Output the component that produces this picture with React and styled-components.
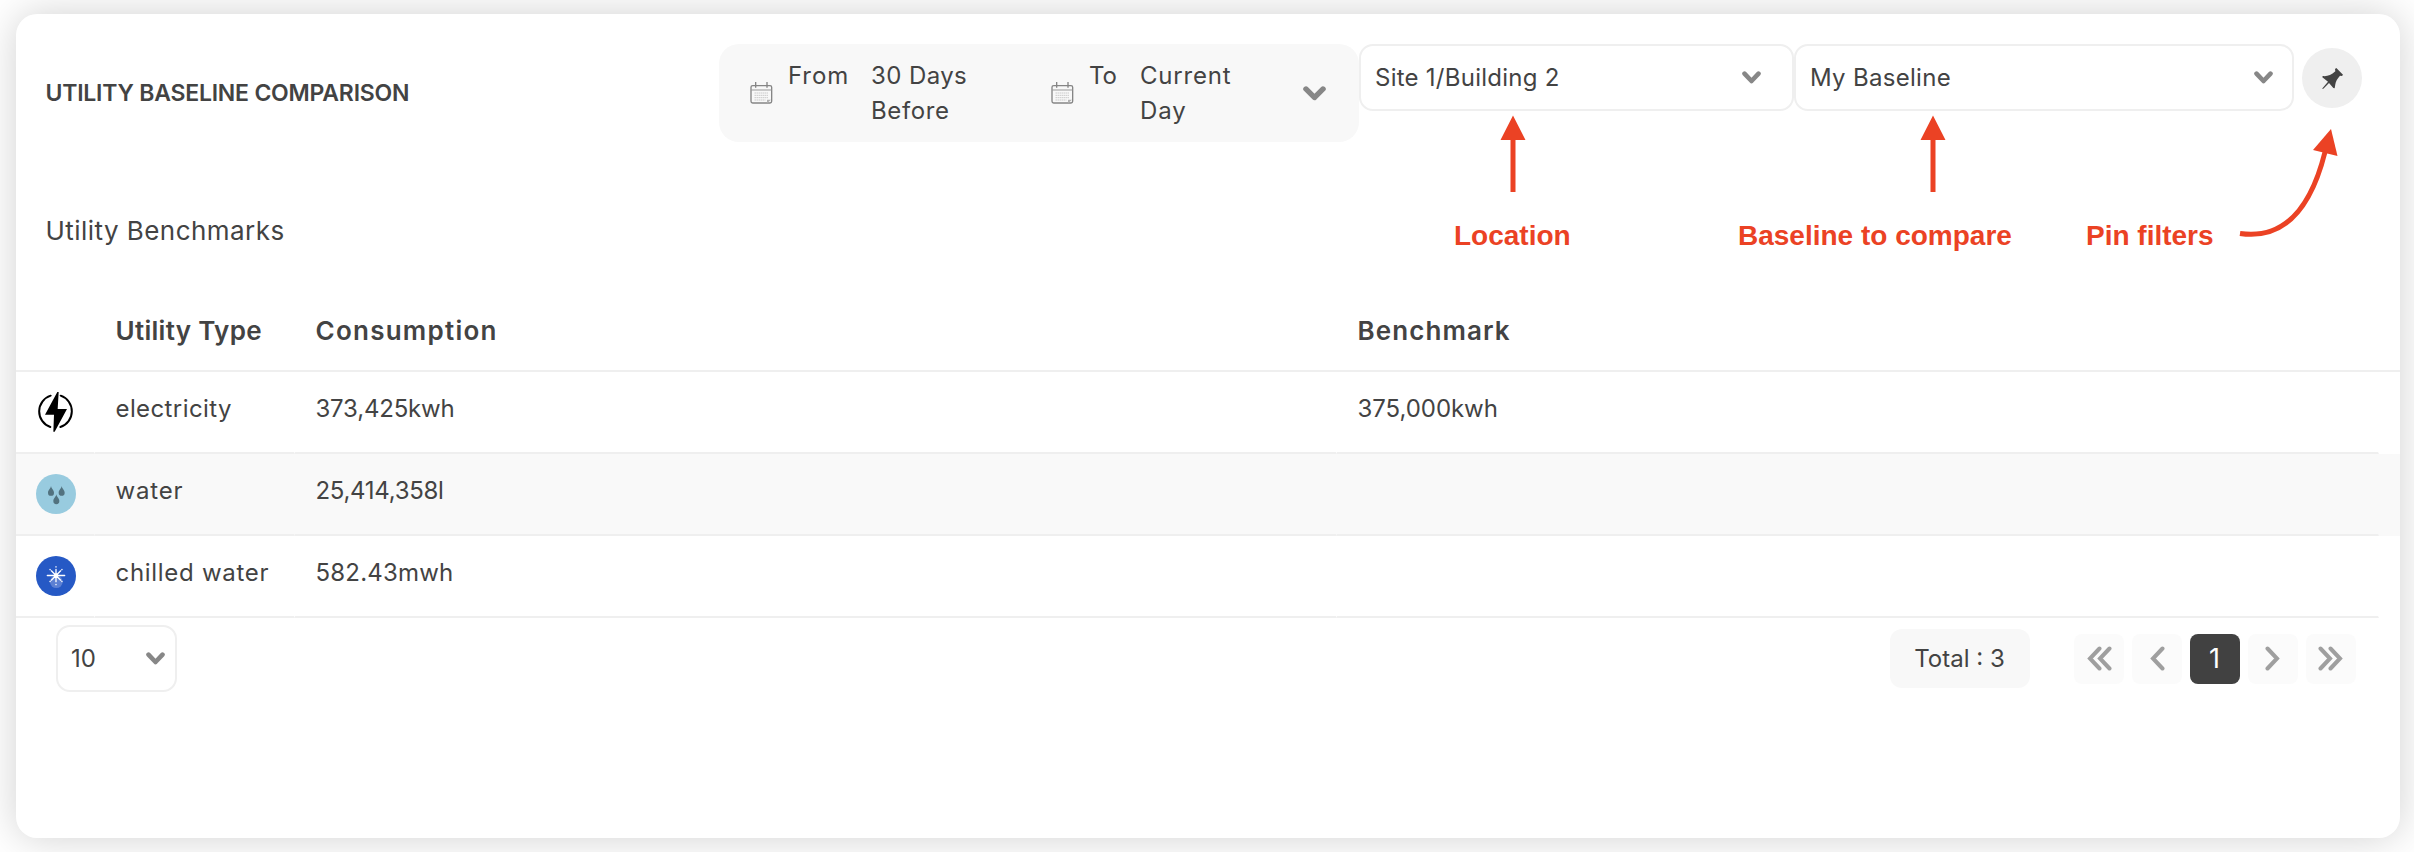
import React from "react";
import styled, { createGlobalStyle } from "styled-components";

const GlobalStyle = createGlobalStyle`
  *, *::before, *::after { box-sizing: border-box; }
  body {
    margin: 0;
    background: #fff;
    color: #434343;
    font-family: Inter, "Open Sans", sans-serif;
  }
`;

const Page = styled.main`
  position: relative;
  height: 852px;
  padding: 14px 14px 14px 16px;
  overflow: hidden;
`;

const Card = styled.section`
  height: 824px;
  border-radius: 21px;
  background: #fff;
  box-shadow: 0 0 42px rgba(0, 0, 0, 0.185);
`;

const Text = styled.span`
  font-size: ${(p) => p.$size || 24}px;
  font-weight: ${(p) => p.$weight || 430};
  letter-spacing: ${(p) => p.$track || 0}px;
  line-height: 35.5px;
  white-space: nowrap;
`;

const Header = styled.header`
  display: flex;
  align-items: flex-start;
  height: 128px;
  padding: 30px 38px 0 29.5px;
`;

const Title = styled.h1`
  flex: 1;
  margin: 0;
  font-size: 23px;
  font-weight: 560;
  letter-spacing: -0.22px;
  line-height: 99px;
`;

const DateRange = styled.div`
  display: flex;
  align-items: center;
  width: 640px;
  height: 98px;
  padding: 0 33px 0 31px;
  border-radius: 20px;
  background: #f8f8f8;
`;

const DateField = styled.div`
  display: flex;
  align-items: center;
  width: ${(p) => p.$width}px;
`;

const DateLabel = styled.div`
  align-self: flex-start;
  display: flex;
  width: ${(p) => p.$width}px;
  margin-left: 15px;
`;

const DateValue = styled.div`
  display: flex;
  flex-direction: column;
`;

const Push = styled.div`
  margin-left: auto;
  display: flex;
`;

const Select = styled.div`
  display: flex;
  align-items: center;
  justify-content: space-between;
  width: ${(p) => p.$width}px;
  height: 67px;
  padding: 0 ${(p) => p.$right}px 0 ${(p) => p.$left || 14}px;
  border: 2px solid #efefef;
  border-radius: 14px;
`;

const PinButton = styled.button`
  display: flex;
  align-items: center;
  justify-content: center;
  width: 60px;
  height: 60px;
  margin: 4px 0 0 8px;
  padding: 0;
  border: 0;
  border-radius: 50%;
  background: #efefef;
`;

const SectionTitle = styled.h2`
  margin: 69px 0 0 29.5px;
  font-size: 26px;
  font-weight: 420;
  letter-spacing: 0.45px;
  line-height: 40px;
`;

const Table = styled.div`
  margin-top: 41px;
`;

const columns = "79px 200px 1042px 1042px";

const HeadRow = styled.div`
  display: grid;
  grid-template-columns: ${columns};
  align-items: center;
  height: 80px;
  border-bottom: 2px solid #efefef;
`;

const HeadCell = styled.div`
  padding-left: 20.5px;
`;

const Row = styled.div`
  display: grid;
  grid-template-columns: ${columns};
  height: 82px;
  background: ${(p) => (p.$striped ? "#f9f9f9" : "#fff")};
`;

const Cell = styled.div`
  display: flex;
  align-items: center;
  padding: 0 0 6px 20.5px;
  border-right: 1px solid transparent;
  border-bottom: 2px solid #efefef;
`;

const IconCell = styled(Cell)`
  padding-bottom: 0;
  padding-left: 20px;
`;

const Footer = styled.footer`
  display: flex;
  align-items: center;
  padding: 7px 44.5px 0 40px;
`;

const Total = styled.div`
  display: flex;
  align-items: center;
  justify-content: center;
  width: 140px;
  height: 59px;
  margin: 0 44px 0 auto;
  border-radius: 12px;
  background: #f8f8f8;
`;

const Pager = styled.nav`
  display: flex;
  gap: 8px;
`;

const PageButton = styled.button`
  display: flex;
  align-items: center;
  justify-content: center;
  width: 50px;
  height: 50px;
  padding: 0;
  border: 0;
  border-radius: 8px;
  font: 400 27px Inter, sans-serif;
  color: ${(p) => (p.$active ? "#fff" : "#9e9e9e")};
  background: ${(p) => (p.$active ? "#414141" : "#fbfbfb")};
`;

const Arrows = styled.svg`
  position: absolute;
  left: 0;
  top: 0;
  width: 2414px;
  height: 260px;
  pointer-events: none;
`;

const Note = styled.span`
  position: absolute;
  left: ${(p) => p.$x}px;
  top: 220px;
  color: #eb4224;
  font: bold 28px/32px "Liberation Sans", Arial, sans-serif;
  white-space: nowrap;
`;

const Chevron = ({ large }) => (
  <svg width={large ? 23 : 19} height={large ? 15 : 13} viewBox="0 0 19 13" preserveAspectRatio="none">
    <path d="M2.5 2.6 9.5 10 16.5 2.6" fill="none" stroke="#878787" strokeWidth="4.6" strokeLinecap="round" strokeLinejoin="round" />
  </svg>
);

const Calendar = () => (
  <svg width="23" height="24" viewBox="0 0 69 72" fill="none">
    <rect x="3" y="14" width="62" height="52" rx="5" stroke="#858585" strokeWidth="4" />
    <path d="M3 27H65" stroke="#999" strokeWidth="3" />
    <path d="M17 3V20M51 3V20" stroke="#858585" strokeWidth="4" />
    <path d="M14 36H54M14 43H54M14 50H54M14 57H46" stroke="#b3b3b3" strokeWidth="3" strokeDasharray="3 3" />
    <path d="M51 64V56H63L52 66Z" fill="#b0b0b0" />
  </svg>
);

const Pin = () => (
  <svg width="21" height="21" viewBox="0 0 63 63">
    <path
      d="M39 3 43 0 63 20 60 24 54 23C46 33 41 39 40 49L38 61 34 60 21 45 4 62 0 62 18 41 1 28 2 24C14 26 27 22 40 10Z"
      fill="#434343"
    />
  </svg>
);

const Bolt = () => (
  <svg width="40" height="40" viewBox="49 37 120 120">
    <path d="M93 48A49.5 49.5 0 0 0 92 142M123 48A49.5 49.5 0 0 1 122 142" fill="none" stroke="#000" strokeWidth="6" strokeLinecap="round" />
    <path d="M113 37 76 105H103L101 156H105L142 88H114L117 37Z" fill="#000" />
  </svg>
);

const Drops = () => (
  <svg width="40" height="40" viewBox="0 0 120 120">
    <circle cx="60" cy="60" r="60" fill="#98cbdf" />
    <g fill="#52727f">
      <path d="M45 36C47 46 54 48 54 56A9 9.5 0 0 1 36 56C36 48 43 46 45 36Z" />
      <path d="M77 36C79 46 86 48 86 56A9 9.5 0 0 1 68 56C68 48 75 46 77 36Z" />
      <path d="M61 61C63 71 70 73 70 81A9 9.5 0 0 1 52 81C52 73 59 71 61 61Z" />
    </g>
  </svg>
);

const Snow = () => (
  <svg width="40" height="40" viewBox="0 0 120 120">
    <circle cx="60" cy="60" r="60" fill="#2659c5" />
    <circle cx="61" cy="77" r="19" fill="#5c80d3" />
    <g stroke="#fff" strokeWidth="4" strokeLinecap="round">
      <path d="M34 58.5H86M60 40V77M46 44.5 74 72.5M74 44.5 46 72.5" />
      <path d="M60 32V33M60 85V86M42 40.5 42.5 41M78 40.5 77.5 41M42 76.5 42.5 76M78 76.5 77.5 76" />
    </g>
    <circle cx="60" cy="58.5" r="7" fill="#fff" />
  </svg>
);

const PageArrow = ({ double, flip }) => (
  <svg width={double ? 26 : 16} height="25" viewBox={double ? "0 0 26 25" : "0 0 16 25"}>
    <g transform={flip ? `translate(${double ? 26 : 16} 0) scale(-1 1)` : undefined} fill="none" stroke="#9f9f9f" strokeWidth="4">
      <path d="M13.5 2.5 4 12.5 13.5 22.5" strokeLinecap="round" />
      {double && <path d="M23.5 2.5 14 12.5 23.5 22.5" strokeLinecap="round" />}
    </g>
  </svg>
);

const heads = [
  ["Utility Type", 0.3],
  ["Consumption", 1.25],
  ["Benchmark", 1.1],
];

const rows = [
  { icon: <Bolt />, cells: [["electricity", 0.4], ["373,425kwh", -0.2], ["375,000kwh", -0.05]] },
  { icon: <Drops />, striped: true, cells: [["water", 0.8], ["25,414,358l", -0.3], ["", 0]] },
  { icon: <Snow />, cells: [["chilled water", 0.7], ["582.43mwh", 0.2], ["", 0]] },
];

export default function App() {
  return (
    <Page>
      <GlobalStyle />
      <Card>
        <Header>
          <Title>UTILITY BASELINE COMPARISON</Title>
          <DateRange>
            <DateField $width={301}>
              <Calendar />
              <DateLabel $width={83}><Text $track={0.9}>From</Text></DateLabel>
              <DateValue>
                <Text $track={0.4}>30 Days</Text>
                <Text $track={0.6}>Before</Text>
              </DateValue>
            </DateField>
            <DateField $width={200}>
              <Calendar />
              <DateLabel $width={51}><Text>To</Text></DateLabel>
              <DateValue>
                <Text $track={0.8}>Current</Text>
                <Text $track={0.9}>Day</Text>
              </DateValue>
            </DateField>
            <Push><Chevron large /></Push>
          </DateRange>
          <Select $width={435} $right={31}>
            <Text $track={0.25}>Site 1/Building 2</Text>
            <Chevron />
          </Select>
          <Select $width={500} $right={19}>
            <Text $track={0.3}>My Baseline</Text>
            <Chevron />
          </Select>
          <PinButton aria-label="Pin filters"><Pin /></PinButton>
        </Header>

        <SectionTitle>Utility Benchmarks</SectionTitle>

        <Table>
          <HeadRow>
            <HeadCell />
            {heads.map(([label, track]) => (
              <HeadCell key={label}>
                <Text $size={26} $weight={560} $track={track}>{label}</Text>
              </HeadCell>
            ))}
          </HeadRow>
          {rows.map((row) => (
            <Row key={row.cells[0][0]} $striped={row.striped}>
              <IconCell>{row.icon}</IconCell>
              {row.cells.map(([label, track], i) => (
                <Cell key={i}><Text $track={track}>{label}</Text></Cell>
              ))}
            </Row>
          ))}
        </Table>

        <Footer>
          <Select $width={121} $left={13} $right={10.5}>
            <Text>10</Text>
            <Chevron />
          </Select>
          <Total><Text>Total : 3</Text></Total>
          <Pager>
            <PageButton aria-label="First page"><PageArrow double /></PageButton>
            <PageButton aria-label="Previous page"><PageArrow /></PageButton>
            <PageButton $active>1</PageButton>
            <PageButton aria-label="Next page"><PageArrow flip /></PageButton>
            <PageButton aria-label="Last page"><PageArrow double flip /></PageButton>
          </Pager>
        </Footer>
      </Card>

      <Arrows viewBox="0 0 2414 260" fill="#eb4224">
        <path d="M1513 115.5 1525.5 140H1515.5V192H1510.5V140H1500.5Z" />
        <path d="M1933 115.5 1945.5 140H1935.5V192H1930.5V140H1920.5Z" />
        <path d="M2331 129 2337.5 156 2313 150Z" />
        <path d="M2240 233.5C2284 240 2311 208 2325 152" fill="none" stroke="#eb4224" strokeWidth="5" />
      </Arrows>
      <Note $x={1454}>Location</Note>
      <Note $x={1738}>Baseline to compare</Note>
      <Note $x={2086}>Pin filters</Note>
    </Page>
  );
}
